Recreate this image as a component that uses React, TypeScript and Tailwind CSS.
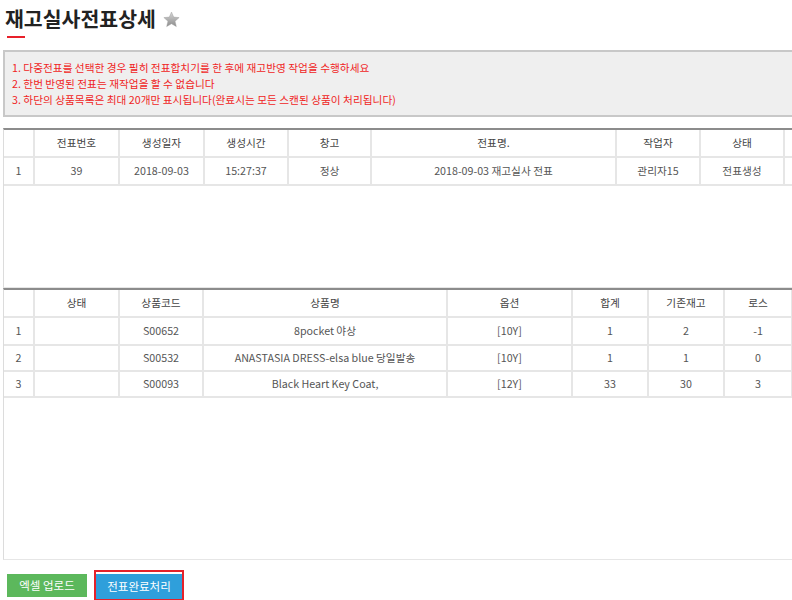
import React from "react";

const font = { fontFamily: '"Noto Sans CJK KR", "Noto Sans", sans-serif' };

const t1Cols = "grid-cols-[31px_85px_85px_84px_83px_245px_84px_84px_80px]";
const t2Cols = "grid-cols-[31px_85px_84px_244px_125px_76px_76px_68px_60px]";

function Cell({ children, h }: { children?: React.ReactNode; h: string }) {
  return (
    <div
      className={`${h} flex items-center justify-center border-r-2 border-b-2 border-[#e6e6e6] whitespace-nowrap overflow-hidden`}
    >
      {children}
    </div>
  );
}

function Star() {
  return (
    <svg width="17" height="17" viewBox="0 0 24 24" className="ml-[7px] mt-[1px]">
      <defs>
        <linearGradient id="sg" x1="0" y1="0" x2="0" y2="1">
          <stop offset="0" stopColor="#d6d6d6" />
          <stop offset="1" stopColor="#8c8c8c" />
        </linearGradient>
      </defs>
      <path
        d="M12 1.5l3.1 7.1 7.7.7-5.8 5.1 1.8 7.6L12 18l-6.8 4 1.8-7.6L1.2 9.3l7.7-.7z"
        fill="url(#sg)"
        stroke="#9a9a9a"
        strokeWidth="0.6"
      />
    </svg>
  );
}

export default function App() {
  const t1Head = ["", "전표번호", "생성일자", "생성시간", "창고", "전표명.", "작업자", "상태", ""];
  const t1Row = ["1", "39", "2018-09-03", "15:27:37", "정상", "2018-09-03 재고실사 전표", "관리자15", "전표생성", ""];
  const t2Head = ["", "상태", "상품코드", "상품명", "옵션", "합계", "기존재고", "로스", ""];
  const t2Rows = [
    ["1", "", "S00652", "8pocket 야상", "[10Y]", "1", "2", "-1", ""],
    ["2", "", "S00532", "ANASTASIA DRESS-elsa blue 당일발송", "[10Y]", "1", "1", "0", ""],
    ["3", "", "S00093", "Black Heart Key Coat,", "[12Y]", "33", "30", "3", ""],
  ];
  const rowH = ["h-[28px]", "h-[26px]", "h-[26px]"];

  return (
    <div className="w-[792px] h-[600px] overflow-hidden bg-white" style={font}>
      {/* Title */}
      <div className="flex items-center pl-[5px] pt-[6px]">
        <span className="text-[20.5px] leading-[25px] font-bold text-[#222]">
          재고실사전표상세
        </span>
        <Star />
      </div>
      <div className="ml-[7px] mt-[5px] w-[18px] h-[2px] bg-[#e8202a]" />

      {/* Notice */}
      <div className="ml-[3px] mt-[12px] w-[800px] border-2 border-[#c8c8c8] bg-[#efefef] pt-[8px] pb-[7px] pl-[7px] text-[10.7px] leading-[16px] text-[#f02525]">
        <div>1. 다중전표를 선택한 경우 필히 전표합치기를 한 후에 재고반영 작업을 수행하세요</div>
        <div>2. 한번 반영된 전표는 재작업을 할 수 없습니다</div>
        <div>3. 하단의 상품목록은 최대 20개만 표시됩니다(완료시는 모든 스캔된 상품이 처리됩니다)</div>
      </div>

      {/* Table 1 */}
      <div className="ml-[3px] mt-[11px] w-[860px] h-[160px] border-t-2 border-t-[#8c8c8c] border-l border-l-[#dcdcdc] border-b border-b-[#e6e6e6] text-[10.7px] text-[#555]">
        <div className={`grid ${t1Cols}`}>
          {t1Head.map((h, i) => (
            <Cell key={"h" + i} h="h-[28px]">
              <span className="text-[#444]">{h}</span>
            </Cell>
          ))}
          {t1Row.map((c, i) => (
            <Cell key={"r" + i} h="h-[28px]">
              {c}
            </Cell>
          ))}
        </div>
      </div>

      {/* Table 2 */}
      <div className="ml-[3px] w-[860px] h-[272px] border-t-2 border-t-[#8c8c8c] border-l border-l-[#dcdcdc] border-b border-b-[#e6e6e6] text-[10.7px] text-[#555]">
        <div className={`grid ${t2Cols}`}>
          {t2Head.map((h, i) => (
            <Cell key={"h" + i} h="h-[28px]">
              <span className="text-[#444]">{h}</span>
            </Cell>
          ))}
          {t2Rows.map((r, ri) =>
            r.map((c, i) => (
              <Cell key={ri + "-" + i} h={rowH[ri]}>
                {c}
              </Cell>
            ))
          )}
        </div>
      </div>

      {/* Buttons */}
      <div className="flex items-center ml-[7px] mt-[10px] gap-[7px]">
        <button className="w-[80px] h-[23px] bg-[#5cb85c] text-white text-[11.5px] leading-[23px] text-center">
          엑셀 업로드
        </button>
        <div className="border-2 border-[#e5222a] p-0">
          <button className="w-[86px] h-[25px] bg-[#2f9fdb] text-white text-[11.5px] leading-[25px] text-center">
            전표완료처리
          </button>
        </div>
      </div>
    </div>
  );
}
